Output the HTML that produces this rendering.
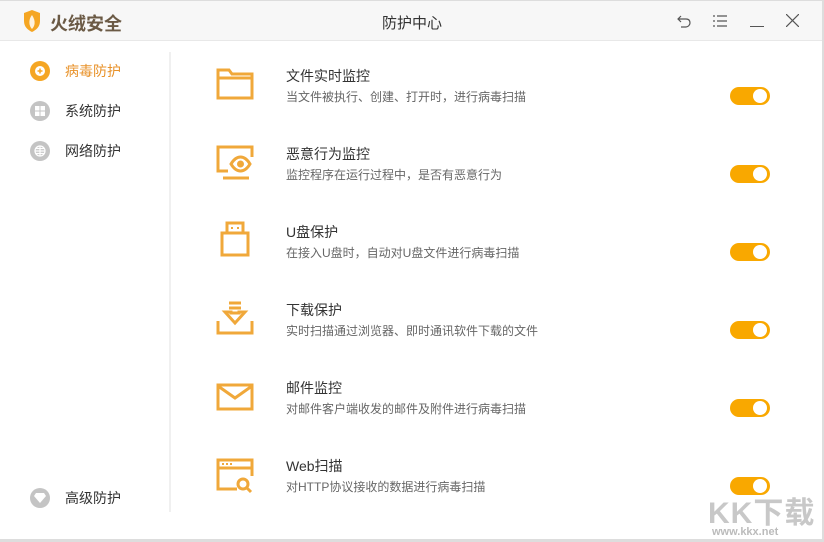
<!DOCTYPE html><html><head><meta charset="utf-8"><style>
*{margin:0;padding:0;box-sizing:border-box}
body{width:824px;height:542px;background:#fff;font-family:"Liberation Sans","Noto Sans CJK SC",sans-serif;position:relative;overflow:hidden}
.top{position:absolute;left:0;top:0;width:824px;height:41px;background:#f7f7f7;border-bottom:1px solid #e8e8e8;border-top:1px solid #ddd}
.logo{position:absolute;left:50px;top:9px;font-size:18px;font-weight:bold;color:#6b5a45}
.title{position:absolute;left:0;width:824px;top:11px;text-align:center;font-size:15px;color:#333}
.side{position:absolute;left:30px;font-size:14px;color:#333}
.side i{position:absolute;left:0;top:0;width:20px;height:20px;border-radius:50%;background:#c4c4c4}
.side span{position:absolute;left:35px;top:0;white-space:nowrap;line-height:20px}
.div{position:absolute;left:169px;top:52px;width:2px;height:460px;background:#f0f0f0}
.row{position:absolute;left:0;width:824px}
.row svg{position:absolute;left:215px;top:-1px}
.t{position:absolute;left:286px;top:0;font-size:14px;color:#333;white-space:nowrap}
.d{position:absolute;left:286px;top:22px;font-size:12px;color:#666;white-space:nowrap}
.tg{position:absolute;left:730px;top:21px;width:40px;height:18px;border-radius:9px;background:#f9a800}
.tg:after{content:"";position:absolute;right:3px;top:2px;width:14px;height:14px;border-radius:50%;background:#fff}
.bot{position:absolute;left:0;top:539px;width:824px;height:3px;background:#ddd}
.rb{position:absolute;right:0;top:0;width:2px;height:542px;background:#ddd}
</style></head><body>
<div class="top">
<svg style="position:absolute;left:22px;top:9px" width="20" height="22" viewBox="0 0 20 22"><path d="M2 3 L10 0 L18 3 V11 C18 17 14 20 10 22 C6 20 2 17 2 11Z" fill="#f5a623"/><path d="M10 5 C6 10 7 16 10 19 C13 16 14 11 10 5Z" fill="#fff" opacity=".85"/></svg>
<div class="logo">火绒安全</div>
<div class="title">防护中心</div>
<svg style="position:absolute;left:676px;top:13px" width="16" height="14" viewBox="0 0 16 14" fill="none" stroke="#555" stroke-width="1.2"><path d="M5 2 L2 5 L5 8 M2 5 H10 C13 5 14 7 14 9 C14 11 12 13 10 13 H5"/></svg>
<svg style="position:absolute;left:713px;top:14px" width="14" height="12" viewBox="0 0 14 12" stroke="#555" stroke-width="1.2"><path d="M0 1h2M4 1h10M0 6h2M4 6h10M0 11h2M4 11h10"/></svg>
<div style="position:absolute;left:750px;top:25px;width:14px;height:1px;background:#555"></div>
<svg style="position:absolute;left:786px;top:13px" width="13" height="13" stroke="#555" stroke-width="1.2"><path d="M0 0L13 13M13 0L0 13"/></svg>
</div>
<div class="side" style="top:61px"><i style="background:#f5a623"></i><svg style="position:absolute;left:4px;top:4px" width="12" height="12"><circle cx="6" cy="6" r="5" fill="#fff"/><path d="M6 3.5v5M3.5 6h5" stroke="#f5a623" stroke-width="1.5"/></svg><span style="color:#e8922a">病毒防护</span></div>
<div class="side" style="top:101px"><i></i><svg style="position:absolute;left:5px;top:5px" width="10" height="10" fill="#fff"><rect x="0" y="0" width="4.5" height="4.5"/><rect x="5.5" y="0" width="4.5" height="4.5"/><rect x="0" y="5.5" width="4.5" height="4.5"/><rect x="5.5" y="5.5" width="4.5" height="4.5"/></svg><span>系统防护</span></div>
<div class="side" style="top:141px"><i></i><svg style="position:absolute;left:4px;top:4px" width="12" height="12" fill="none" stroke="#fff" stroke-width="1.2"><circle cx="6" cy="6" r="5"/><path d="M1 6h10M6 1v10M2 3.5h8M2 8.5h8"/></svg><span>网络防护</span></div>
<div class="side" style="top:488px"><i></i><svg style="position:absolute;left:4px;top:5px" width="12" height="10" fill="#fff"><path d="M2 0h8l2 3-6 7-6-7z"/></svg><span>高级防护</span></div>
<div class="div"></div>

<div class="row" style="top:66px"><svg width="40" height="40" viewBox="0 0 40 40" fill="none" stroke="#f0a83a" stroke-width="3"><path d="M3 5h11l3 4h20v24H3z M3 13h34"/></svg><div class="t">文件实时监控</div><div class="d">当文件被执行、创建、打开时，进行病毒扫描</div><div class="tg"></div></div>
<div class="row" style="top:144px"><svg width="40" height="40" viewBox="0 0 40 40" fill="none" stroke="#f0a83a" stroke-width="3"><path d="M37 14V4H3v24h10 M8 35h26"/><path d="M16 21c3-5 6-7 9.5-7s6.5 2 9.5 7c-3 5-6 7-9.5 7s-6.5-2-9.5-7z"/><circle cx="25.5" cy="21" r="2" fill="#f0a83a"/></svg><div class="t">恶意行为监控</div><div class="d">监控程序在运行过程中，是否有恶意行为</div><div class="tg"></div></div>
<div class="row" style="top:222px"><svg width="40" height="40" viewBox="0 0 40 40" fill="none" stroke="#f0a83a" stroke-width="3"><path d="M12 2h16v10H12z M7 12h26v22H7z"/><path d="M16 7h2M22 7h2" stroke-width="2"/></svg><div class="t">U盘保护</div><div class="d">在接入U盘时，自动对U盘文件进行病毒扫描</div><div class="tg"></div></div>
<div class="row" style="top:300px"><svg width="40" height="40" viewBox="0 0 40 40" fill="none" stroke="#f0a83a" stroke-width="3"><path d="M3 22v12h34V22"/><path d="M14 4h12M14 9h12M16 14h8v-1h6L20 24 10 13h6z"/></svg><div class="t">下载保护</div><div class="d">实时扫描通过浏览器、即时通讯软件下载的文件</div><div class="tg"></div></div>
<div class="row" style="top:378px"><svg width="40" height="40" viewBox="0 0 40 40" fill="none" stroke="#f0a83a" stroke-width="3"><path d="M3 8h34v24H3z M3 9l17 12 17-12"/></svg><div class="t">邮件监控</div><div class="d">对邮件客户端收发的邮件及附件进行病毒扫描</div><div class="tg"></div></div>
<div class="row" style="top:456px"><svg width="40" height="40" viewBox="0 0 40 40" fill="none" stroke="#f0a83a" stroke-width="3"><path d="M22 34H3V5h34v16 M3 13h34"/><path d="M7 9h2M11 9h2M15 9h2" stroke-width="2"/><circle cx="28" cy="29" r="5"/><path d="M32 33l4 4"/></svg><div class="t">Web扫描</div><div class="d">对HTTP协议接收的数据进行病毒扫描</div><div class="tg"></div></div>
<div style="position:absolute;left:708px;top:488px;font-size:30px;font-weight:bold;color:#c8c8c8;letter-spacing:1px">KK下载</div>
<div style="position:absolute;left:712px;top:526px;font-size:11px;font-weight:bold;color:#bbb">www.kkx.net</div>
<div class="bot"></div><div class="rb"></div>
</body></html>
